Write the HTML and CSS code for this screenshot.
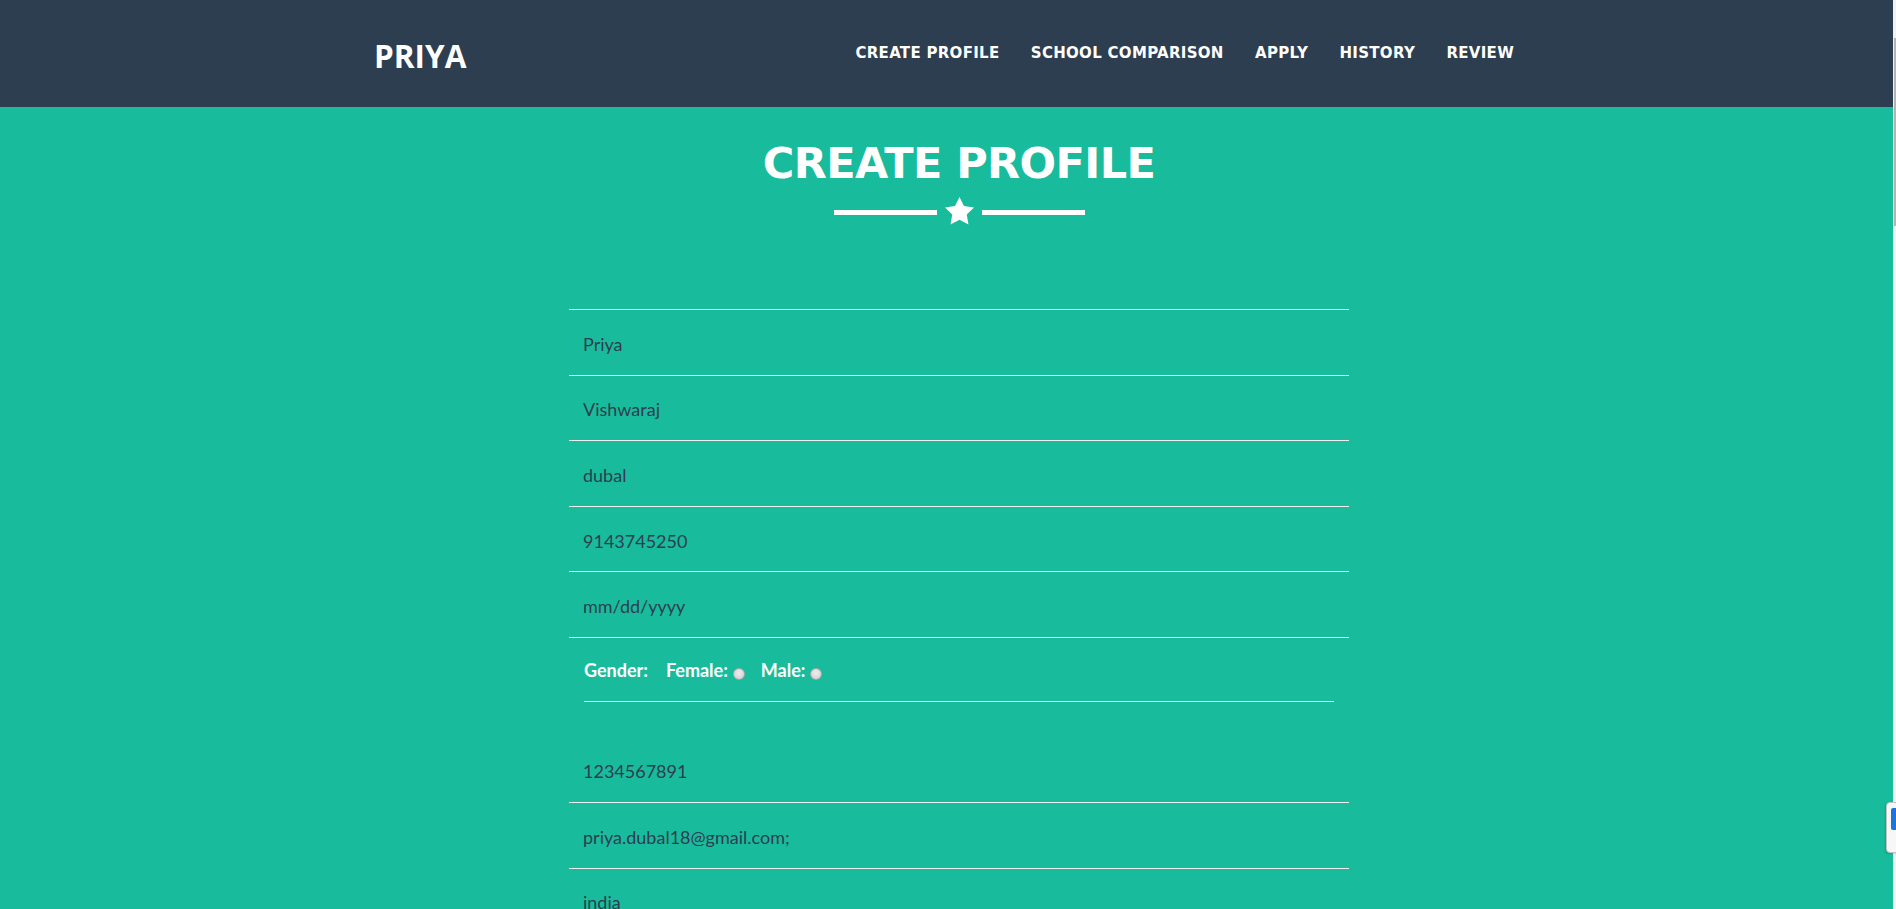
FILE: index.html
```html
<!DOCTYPE html>
<html lang="en">
<head>
<meta charset="utf-8">
<title>Create Profile</title>
<link rel="stylesheet" href="styles.css">
</head>
<body>
<div class="app">
  <div class="page">
    <header class="topbar">
      <div class="topbar-inner">
        <a class="brand" href="#">PRIYA</a>
        <nav class="nav">
          <a href="#">CREATE PROFILE</a>
          <a href="#">SCHOOL COMPARISON</a>
          <a href="#">APPLY</a>
          <a href="#">HISTORY</a>
          <a href="#">REVIEW</a>
        </nav>
      </div>
    </header>
    <main class="content">
      <h2 class="title">CREATE PROFILE</h2>
      <div class="divider">
        <span class="rule"></span>
        <svg class="star" viewBox="2 2 20 19.02" width="29" height="27.6" aria-hidden="true"><path d="M12 2l3.09 6.26L22 9.27l-5 4.87 1.18 6.88L12 17.77l-6.18 3.25L7 14.14 2 9.27l6.91-1.01L12 2z" fill="#ffffff"/></svg>
        <span class="rule"></span>
      </div>
      <form class="profile-form">
        <div class="field"><input class="field-input" type="text" value="Priya"></div>
        <div class="field"><input class="field-input" type="text" value="Vishwaraj"></div>
        <div class="field"><input class="field-input" type="text" value="dubal"></div>
        <div class="field"><input class="field-input" type="text" value="9143745250"></div>
        <div class="field"><input class="field-input" type="text" value="mm/dd/yyyy"></div>
        <div class="gender-row">
          <div class="gender-inner">
            <span class="gender-label">Gender:</span>
            <label class="gender-option">Female:<input class="radio" type="radio" name="gender"></label>
            <label class="gender-option">Male:<input class="radio" type="radio" name="gender"></label>
          </div>
        </div>
        <div class="field field-spaced"><input class="field-input" type="text" value="1234567891"></div>
        <div class="field"><input class="field-input" type="text" value="priya.dubal18@gmail.com;"></div>
        <div class="field"><input class="field-input" type="text" value="india"></div>
      </form>
    </main>
  </div>
  <div class="scrollbar"><div class="thumb"></div></div>
  <div class="widget"><span class="widget-icon"></span></div>
</div>
</body>
</html>
```

FILE: styles.css
```css
html, body {
  margin: 0;
  padding: 0;
  height: 909px;
  overflow: hidden;
}

.app {
  display: flex;
  height: 909px;
}

.page {
  flex: 1;
  min-width: 0;
  background: #18bc9c;
  overflow: hidden;
}

.topbar {
  background: #2c3e50;
  height: 107px;
}

.topbar-inner {
  display: flex;
  align-items: flex-start;
  justify-content: space-between;
  margin-left: 374px;
  width: 1140px;
}

.brand {
  font-family: "Open Sans", "Liberation Sans", sans-serif;
  font-weight: 700;
  font-size: 31.5px;
  line-height: 1;
  color: #ffffff;
  text-decoration: none;
  margin-top: 39.7px;
}

.nav {
  display: flex;
  gap: 31.3px;
  margin-top: 46.2px;
}

.nav a {
  font-family: "DejaVu Sans", sans-serif;
  font-weight: 700;
  font-size: 15px;
  line-height: 1;
  letter-spacing: 0.3px;
  color: #ffffff;
  text-decoration: none;
}

.content {
  padding-left: 25px;
}

.title {
  margin: 30.5px 0 0;
  text-align: center;
  font-family: "DejaVu Sans", sans-serif;
  font-weight: 700;
  font-size: 43px;
  line-height: 50px;
  letter-spacing: -0.6px;
  color: #ffffff;
}

.divider {
  display: flex;
  justify-content: center;
  align-items: flex-start;
  gap: 8px;
  margin-top: 9.5px;
  height: 27px;
}

.rule {
  display: block;
  width: 103px;
  height: 5px;
  background: #ffffff;
  margin-top: 13px;
}

.star {
  display: block;
}

.profile-form {
  width: 780px;
  margin: 85px auto 0;
  border-top: 1px solid #eeeeee;
}

.field {
  height: 65.6px;
  box-sizing: border-box;
  border-bottom: 1px solid #eeeeee;
  padding: 23px 15px 0 14px;
}

.field-spaced {
  margin-top: 35.4px;
}

.field-input {
  display: block;
  width: 100%;
  box-sizing: border-box;
  margin: 0;
  padding: 0;
  border: none;
  outline: none;
  background: transparent;
  font-family: Lato, "Liberation Sans", sans-serif;
  font-size: 18px;
  line-height: 21.6px;
  height: 21.6px;
  color: #2c3e50;
}

.gender-row {
  height: 64px;
  padding: 0 15px;
}

.gender-inner {
  height: 64px;
  box-sizing: border-box;
  border-bottom: 1px solid #eeeeee;
  padding-top: 21.6px;
  display: flex;
  align-items: baseline;
  gap: 18px;
  font-family: Lato, "Liberation Sans", sans-serif;
  font-weight: 700;
  font-size: 18px;
  line-height: 21.6px;
  color: #ffffff;
}

.gender-option {
  display: inline-flex;
  align-items: baseline;
  gap: 5px;
}

.gender-option + .gender-option {
  margin-left: -2px;
}

.radio {
  -webkit-appearance: none;
  appearance: none;
  width: 12px;
  height: 12px;
  margin: 0;
  border: 1px solid #a8a8a8;
  border-radius: 50%;
  background: radial-gradient(circle at 50% 40%, #eeeeee 0%, #d6d6d6 70%, #c8c8c8 100%);
  box-sizing: border-box;
  position: relative;
  top: 3px;
}

.scrollbar {
  width: 3px;
  background: #f1f1f1;
  position: relative;
}

.thumb {
  margin-top: 38px;
  margin-left: 1px;
  width: 2px;
  height: 188px;
  background: #b3b3b3;
}

.widget {
  position: absolute;
  top: 802px;
  left: 1886px;
  width: 14px;
  height: 51px;
  box-sizing: border-box;
  background: #f7f7f7;
  border: 1px solid #c4c4c4;
  border-radius: 4px 0 0 4px;
  box-shadow: -1px 1px 2px rgba(0,0,0,0.15);
}

.widget-icon {
  position: absolute;
  left: 4px;
  top: 5px;
  width: 8px;
  height: 22px;
  background: #1976e0;
  border-radius: 2px;
}
```
